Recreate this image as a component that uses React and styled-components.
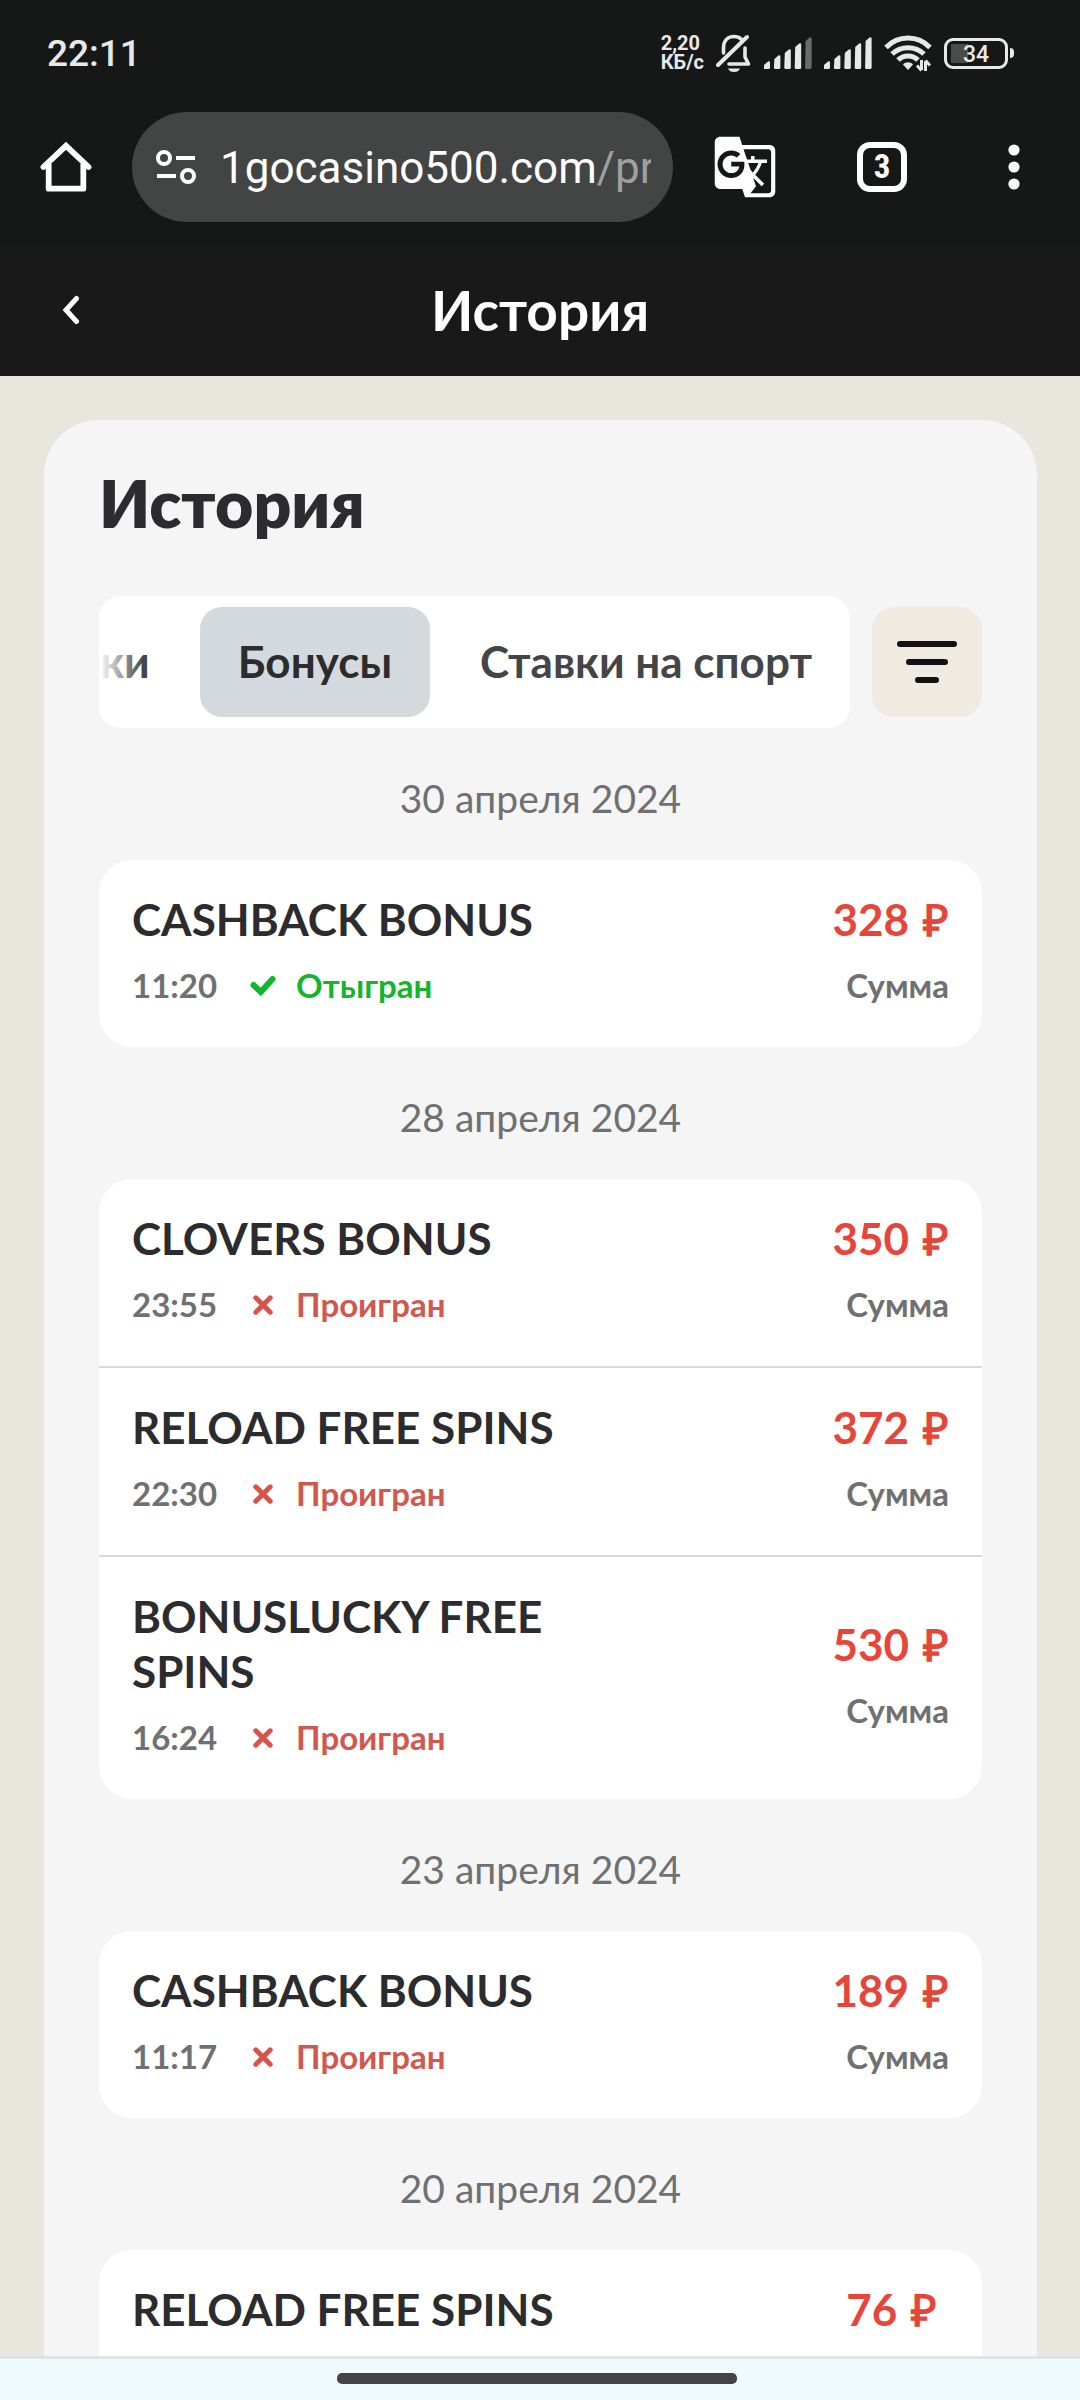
import React from "react";
import styled, { createGlobalStyle } from "styled-components";
import { MdGTranslate } from "react-icons/md";

const tabs = ["Покупки", "Бонусы", "Ставки на спорт"];

const history = [
  {
    date: "30 апреля 2024",
    items: [{ name: "CASHBACK BONUS", time: "11:20", won: true, sum: 328 }],
  },
  {
    date: "28 апреля 2024",
    items: [
      { name: "CLOVERS BONUS", time: "23:55", won: false, sum: 350 },
      { name: "RELOAD FREE SPINS", time: "22:30", won: false, sum: 372 },
      { name: "BONUSLUCKY FREE SPINS", time: "16:24", won: false, sum: 530 },
    ],
  },
  {
    date: "23 апреля 2024",
    items: [{ name: "CASHBACK BONUS", time: "11:17", won: false, sum: 189 }],
  },
  {
    date: "20 апреля 2024",
    items: [{ name: "RELOAD FREE SPINS", time: "12:40", won: false, sum: 76 }],
  },
];

const BellOffIcon = () => (
  <svg width="36" height="40" viewBox="0 0 36 40" fill="none">
    <path
      d="M7.500 20V15C7.500 8 11.500 3.500 18 3.500c3 0 5.500 1 7.500 2.800M29 15v9l3.500 7H13"
      stroke="#e8e8e8"
      strokeWidth="3.600"
      strokeLinejoin="round"
      strokeLinecap="round"
    />
    <path d="M2 32L31 4" stroke="#e8e8e8" strokeWidth="4" strokeLinecap="round" />
    <path d="M12 35.500h12c-1 2.500-3 3.500-6 3.500s-5-1-6-3.500z" fill="#e8e8e8" />
  </svg>
);

const SignalIcon = ({ level }) => (
  <svg width="48" height="32" viewBox="0 0 48 32">
    {[8, 14, 20, 26, 32].map((h, i) => (
      <path
        key={h}
        d={`M${i * 10.4} ${36 - h}l4-3.500q2-1 2 1V30.500q0 1.500-1.500 1.500h-3.500q-1.500 0-1.500-1.500z`}
        fill={i < level ? "#e8e8e8" : "#6b6d6c"}
      />
    ))}
  </svg>
);

const WifiIcon = () => (
  <svg width="48" height="38" viewBox="0 0 48 38" fill="none">
    <g stroke="#e8e8e8" strokeWidth="5">
      <path d="M2 13.500C14 .8 34 .8 46 13.500" />
      <path d="M8 20c8.500-8.500 23.500-8.500 32 0" />
      <path d="M14 26c5.500-5.500 14.500-5.500 20 0" />
    </g>
    <path d="M24 36l-5-5.500c2.500-3 7.500-3 10 0z" fill="#e8e8e8" />
    <path d="M37.500 26v10M33 31.500l4.500 5M41.500 37V27M46 31.500l-4.500-5" stroke="#e8e8e8" strokeWidth="3" />
  </svg>
);

const HomeIcon = () => (
  <svg width="66" height="66" viewBox="0 0 24 24" fill="none" stroke="#fff" strokeWidth="2.100">
    <path d="M3.800 12L12 4.300 20.200 12" strokeLinecap="round" />
    <path d="M5.700 10.800v9.100h12.600v-9.100" strokeLinejoin="round" />
  </svg>
);

const TuneIcon = () => (
  <svg width="44" height="44" viewBox="0 0 44 44" fill="none" stroke="#fff" strokeWidth="4">
    <circle cx="10" cy="13" r="6" />
    <path d="M22 13h19M3 31h19" />
    <circle cx="34" cy="31" r="6" />
  </svg>
);

const DotsIcon = () => (
  <svg width="12" height="46" viewBox="0 0 12 46" fill="#fff">
    <circle cx="6" cy="6" r="5.600" />
    <circle cx="6" cy="23" r="5.600" />
    <circle cx="6" cy="40" r="5.600" />
  </svg>
);

const BackIcon = () => (
  <svg width="18" height="30" viewBox="0 0 18 30" fill="none" stroke="#fff" strokeWidth="5">
    <path d="M14.500 3.500L4 15l10.500 11.500" strokeLinecap="round" />
  </svg>
);

const FilterIcon = () => (
  <svg width="66" height="66" viewBox="0 0 66 66" stroke="#111" strokeWidth="6">
    <path d="M6 15h54M15 33h36M24 51h18" strokeLinecap="round" />
  </svg>
);

const CheckIcon = () => (
  <svg width="26" height="22" viewBox="0 0 26 22" fill="none" stroke="#0cb92a" strokeWidth="6">
    <path d="M3.500 10l7.300 7L22.500 4" strokeLinecap="round" />
  </svg>
);

const CrossIcon = () => (
  <svg width="20" height="20" viewBox="0 0 20 20" fill="none" stroke="#d9534a" strokeWidth="5">
    <path d="M2.800 2.800l14.400 14.400M17.200 2.800L2.800 17.200" strokeLinecap="round" />
  </svg>
);

const HistoryItem = ({ item }) => {
  return (
    <Item>
      <ItemInfo>
        <ItemName>{item.name}</ItemName>
        <ItemMeta>
          <ItemTime>{item.time}</ItemTime>
          <StatusIcon>{item.won ? <CheckIcon /> : <CrossIcon />}</StatusIcon>
          <Status $won={item.won}>{item.won ? "Отыгран" : "Проигран"}</Status>
        </ItemMeta>
      </ItemInfo>
      <ItemSum>
        <Amount>
          <span>{item.sum}</span>
          <span>₽</span>
        </Amount>
        <SumLabel>Сумма</SumLabel>
      </ItemSum>
    </Item>
  );
};

const App = () => {
  return (
    <Screen>
      <GlobalStyle />
      <StatusBar>
        <Clock>22:11</Clock>
        <StatusIcons>
          <NetSpeed>
            <span>2,20</span>
            <span>КБ/с</span>
          </NetSpeed>
          <BellOffIcon />
          <Signals>
            <SignalIcon level={4} />
            <SignalIcon level={5} />
          </Signals>
          <WifiIcon />
          <Battery>
            <BatteryBody>34</BatteryBody>
            <BatteryTip />
          </Battery>
        </StatusIcons>
      </StatusBar>

      <Toolbar>
        <HomeButton aria-label="Главная">
          <HomeIcon />
        </HomeButton>
        <AddressBar>
          <TuneIcon />
          <Url>
            1gocasino500.com<UrlPath>/profile</UrlPath>
          </Url>
        </AddressBar>
        <ToolButton $width={143} aria-label="Перевести">
          <MdGTranslate size={66} />
        </ToolButton>
        <ToolButton $width={132} aria-label="Вкладки">
          <TabCount>3</TabCount>
        </ToolButton>
        <ToolButton $width={132} aria-label="Меню">
          <DotsIcon />
        </ToolButton>
      </Toolbar>

      <Header>
        <BackButton aria-label="Назад">
          <BackIcon />
        </BackButton>
        <HeaderTitle>История</HeaderTitle>
      </Header>

      <Content>
        <Panel>
          <Title>История</Title>
          <Controls>
            <Tabs>
              {tabs.map((tab) => (
                <Tab key={tab} $active={tab === "Бонусы"}>
                  {tab}
                </Tab>
              ))}
            </Tabs>
            <FilterButton aria-label="Фильтр">
              <FilterIcon />
            </FilterButton>
          </Controls>
          {history.map((day) => (
            <section key={day.date}>
              <DayTitle>{day.date}</DayTitle>
              <Card>
                {day.items.map((item) => (
                  <HistoryItem key={item.time} item={item} />
                ))}
              </Card>
            </section>
          ))}
        </Panel>
      </Content>

      <NavBar>
        <NavHandle />
      </NavBar>
    </Screen>
  );
};

export default App;

const GlobalStyle = createGlobalStyle`
  * {
    box-sizing: border-box;
  }

  body {
    margin: 0;
    font-family: Lato, "Open Sans", sans-serif;
    color: #2c2c2e;
  }

  button {
    margin: 0;
    padding: 0;
    border: none;
    background: none;
    color: inherit;
    font: inherit;
  }

  svg {
    display: block;
    flex-shrink: 0;
  }
`;

const Screen = styled.div`
  height: 100vh;
  display: flex;
  flex-direction: column;
  overflow: hidden;
  background: #e9e6de;
`;

const StatusBar = styled.div`
  flex-shrink: 0;
  display: flex;
  justify-content: space-between;
  align-items: center;
  height: 106px;
  padding: 0 66px 0 47px;
  background: #151817;
  color: #e8e8e8;
  font-family: Roboto, sans-serif;
`;

const Clock = styled.span`
  font-size: 37px;
  font-weight: 500;
`;

const StatusIcons = styled.div`
  display: flex;
  align-items: center;
  gap: 12px;
`;

const NetSpeed = styled.span`
  display: flex;
  flex-direction: column;
  font-size: 20px;
  line-height: 19px;
  font-weight: 700;
`;

const Signals = styled.div`
  display: flex;
  gap: 12px;
`;

const Battery = styled.div`
  display: flex;
  align-items: center;
  gap: 2px;
`;

const BatteryBody = styled.div`
  width: 64px;
  height: 31px;
  border: 3px solid #e8e8e8;
  border-radius: 9px;
  background: linear-gradient(#4a4c4b, #4a4c4b) 4px 3px / 17px 19px no-repeat;
  font-size: 23px;
  line-height: 27px;
  font-weight: 500;
  text-align: center;
`;

const BatteryTip = styled.div`
  width: 4px;
  height: 10px;
  border-radius: 0 4px 4px 0;
  background: #e8e8e8;
`;

const Toolbar = styled.div`
  flex-shrink: 0;
  display: flex;
  align-items: center;
  padding: 6px 0 25px 33px;
  background: #151817;
  color: #fff;
  font-family: Roboto, sans-serif;
`;

const HomeButton = styled.button`
  margin-right: 33px;
`;

const AddressBar = styled.div`
  flex: 1;
  min-width: 0;
  display: flex;
  align-items: center;
  gap: 22px;
  height: 110px;
  padding: 0 22px;
  border-radius: 55px;
  background: #434544;
`;

const Url = styled.span`
  overflow: hidden;
  white-space: nowrap;
  font-size: 44px;
  line-height: 55px;
  padding-top: 2px;
`;

const UrlPath = styled.span`
  color: #9fa1a0;
`;

const ToolButton = styled.button`
  flex-shrink: 0;
  width: ${(props) => props.$width}px;
  height: 110px;
  display: flex;
  align-items: center;
  justify-content: center;
`;

const TabCount = styled.span`
  width: 50px;
  height: 50px;
  border: 6px solid #fff;
  border-radius: 13px;
  font-family: "Roboto Condensed", Roboto, sans-serif;
  font-size: 33px;
  line-height: 38px;
  font-weight: 700;
`;

const Header = styled.header`
  flex-shrink: 0;
  display: grid;
  grid-template-columns: 99px 1fr 99px;
  align-items: center;
  height: 129px;
  padding-bottom: 4px;
  background: #191919;
  color: #fff;
`;

const BackButton = styled.button`
  display: flex;
  justify-content: flex-end;
  padding-right: 19px;
`;

const HeaderTitle = styled.div`
  font-size: 55px;
  font-weight: 700;
  text-align: center;
`;

const Content = styled.main`
  flex: 1;
  min-height: 0;
  overflow: hidden;
  padding: 44px 43px 0 44px;
`;

const Panel = styled.div`
  padding: 44px 55px;
  border-radius: 55px;
  background: #f5f5f5;
`;

const Title = styled.h1`
  margin: 0 0 55px;
  font-size: 66px;
  line-height: 77px;
  font-weight: 800;
`;

const Controls = styled.div`
  display: flex;
  align-items: center;
  gap: 22px;
`;

/* scrolled to the end, the first tab fades out on the left */
const Tabs = styled.div`
  flex: 1;
  min-width: 0;
  display: flex;
  justify-content: flex-end;
  gap: 12px;
  padding: 11px 0;
  border-radius: 22px;
  overflow: hidden;
  background: #fff;
  position: relative;

  &::before {
    content: "";
    position: absolute;
    inset: 0 auto 0 0;
    width: 44px;
    background: linear-gradient(to right, #fff, rgba(255, 255, 255, 0));
  }
`;

const Tab = styled.button`
  flex-shrink: 0;
  height: 110px;
  padding: 0 38px 2px;
  border-radius: 22px;
  background: ${(props) => (props.$active ? "#d3d9dd" : "none")};
  color: ${(props) => (props.$active ? "#2c2c2e" : "#434546")};
  font-size: 44px;
  font-weight: 700;
`;

const FilterButton = styled.button`
  flex-shrink: 0;
  width: 110px;
  height: 110px;
  display: flex;
  align-items: center;
  justify-content: center;
  border-radius: 22px;
  background: #f0eae1;
`;

const DayTitle = styled.h2`
  margin: 0;
  padding-top: 8px;
  font-size: 39px;
  line-height: 124px;
  font-weight: 400;
  text-align: center;
  color: #6f7071;
`;

const Card = styled.ul`
  margin: 0;
  padding: 0;
  list-style: none;
  border-radius: 33px;
  background: #fff;
`;

const Item = styled.li`
  display: flex;
  align-items: center;
  justify-content: space-between;
  padding: 32px 33px 34px;

  & + & {
    border-top: 2px solid #d5dadd;
  }
`;

const ItemInfo = styled.div`
  width: 60%;
`;

const ItemName = styled.div`
  font-size: 44px;
  line-height: 55px;
  font-weight: 700;
`;

const ItemMeta = styled.div`
  display: flex;
  align-items: center;
  margin-top: 11px;
  font-size: 33px;
  line-height: 55px;
`;

const ItemTime = styled.span`
  color: #6f7071;
  font-weight: 700;
`;

const StatusIcon = styled.span`
  width: 44px;
  margin: 0 11px 0 24px;
  display: flex;
  justify-content: center;
`;

const Status = styled.span`
  font-weight: 700;
  color: ${(props) => (props.$won ? "#14b42e" : "#d1584f")};
`;

const ItemSum = styled.div`
  line-height: 55px;
`;

const Amount = styled.div`
  display: flex;
  gap: 14px;
  font-size: 44px;
  font-weight: 700;
  color: #e6463a;
`;

const SumLabel = styled.div`
  margin-top: 11px;
  font-size: 33px;
  font-weight: 700;
  text-align: right;
  color: #6f7071;
`;

const NavBar = styled.div`
  flex-shrink: 0;
  display: flex;
  justify-content: center;
  height: 44px;
  padding: 14px 6px 0 0;
  border-top: 3px solid #dbe4e6;
  background: #f0fafc;
`;

const NavHandle = styled.div`
  width: 400px;
  height: 11px;
  border-radius: 5px;
  background: #434544;
`;
